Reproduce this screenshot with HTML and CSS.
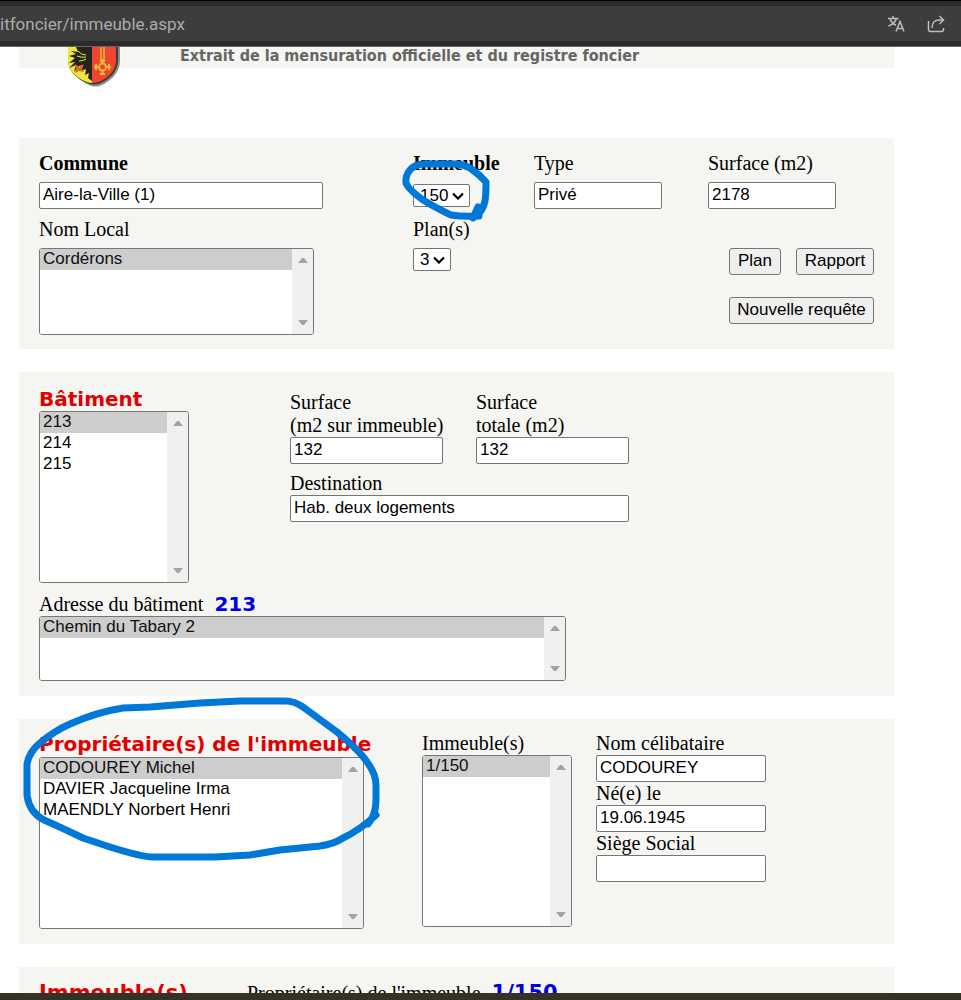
FILE: index.html
```html
<!DOCTYPE html>
<html lang="fr">
<head>
<meta charset="utf-8">
<title>Extrait foncier</title>
<link rel="stylesheet" href="styles.css">
</head>
<body>
<svg class="defs" aria-hidden="true">
  <symbol id="up" viewBox="0 0 10 5"><path d="M0 5 4 0h2l4 5z" fill="#a3a3a3"/></symbol>
  <symbol id="down" viewBox="0 0 10 5"><path d="M0 0h10L6 5H4z" fill="#a3a3a3"/></symbol>
</svg>
<header class="browser">
  <div class="address">
    <span class="url">itfoncier/immeuble.aspx</span>
    <button class="tool" aria-label="Traduire"><svg width="18" height="18" viewBox="0 0 18 18"><path d="M1 3.5h10.500M6 1v2.500M3 3.500c.8 3 3.200 5.500 6 6.700M9.300 3.500C8.500 7 5.500 9.600 1.500 11M9 16.500 13 6.500l4 10M10.200 13.500h5.600"/></svg></button>
    <button class="tool" aria-label="Partager"><svg width="18" height="18" viewBox="0 0 18 18"><path d="M1.500 6v8.500q0 2 2 2h11q2 0 2-2V13M5 13c0-5 3-8 7-8h4.500M12.500 1l4 4-4 4"/></svg></button>
  </div>
</header>
<main class="page">
  <div class="banner">
    <svg class="crest" width="56" height="41" viewBox="0 0 56 41">
      <path d="M4 0h50v14c0 11-9 20-18 24q-6 3-13 0C13 34 4 25 4 14z" fill="#8c8c88"/>
      <path d="M2 0h50v13c0 11-8 19-17 23q-7 3-14 0C11 32 2 24 2 13z" fill="#3e3b34"/>
      <path d="M2 0h24v36q-4 0-8-2C8 29 2 22 2 13z" fill="#eee63c"/>
      <path d="M26 0h24v13c0 10-7 17-15 21q-4 2-9 2z" fill="#ee4630"/>
      <path d="M10 0h16v34l-4-3 1-5-4 2 1-6-5 2 2-6-4 1-5 6 2-7-7 3 6-6-6 1 6-5-6-2 7-2-5-3 7 1-2-5z" fill="#24231f"/>
      <path d="M12 4q3 4 8 4M11 9q5 2 9 1M13 14q4 0 7-2" fill="none" stroke="#eee63c"/>
      <path d="m9 17 4 3 5-3-2 5 2 3-5-1-4 2 1-4z" fill="#d96b28"/>
      <path d="M35 0v14M38 0v14" stroke="#e5b73a" stroke-width="1.500"/>
      <g fill="none" stroke="#e9b93b" stroke-width="2"><circle cx="36.500" cy="20" r="3.500"/><path d="M36.500 12v4M36.500 24v4M28 20h4M41 20h4M34 14h5M34 27h5M30 17v6M43 17v6"/></g>
    </svg>
    <h1 class="title">Extrait de la mensuration officielle et du registre foncier</h1>
  </div>

  <section class="panel property">
    <div class="field spaced"><label class="strong" for="commune">Commune</label><input class="w-commune" id="commune" value="Aire-la-Ville (1)"></div>
    <div class="field spaced"><label class="strong" for="immeuble">Immeuble</label><select class="drop" id="immeuble"><option>150</option></select></div>
    <div class="field spaced"><label for="type">Type</label><input class="w-short" id="type" value="Privé"></div>
    <div class="field spaced"><label for="surface">Surface (m2)</label><input class="w-short" id="surface" value="2178"></div>
    <div class="field spaced"><label for="local">Nom Local</label>
      <div class="list local"><select id="local" size="4"><option selected>Cordérons</option></select><span class="track"><svg><use href="#up"/></svg><svg><use href="#down"/></svg></span></div></div>
    <div class="field spaced"><label for="plan">Plan(s)</label><select class="drop" id="plan"><option>3</option></select></div>
    <div class="actions">
      <button class="btn">Plan</button><button class="btn">Rapport</button>
      <button class="btn wide">Nouvelle requête</button>
    </div>
    <svg class="ink ink-a" width="92" height="68" viewBox="400 158 92 68"><path d="M478 207 473 218Q483 212 485 201C486 196 486 190 486 182Q479 174 470 168Q463 164 456 164H424Q415 164 410 170Q405 176 406 183Q408 189 423 200Q438 209 451 215Q464 217 479 216"/></svg>
  </section>

  <section class="panel building">
    <div class="building-top">
      <div class="field building-list"><label class="heading" for="batiment">Bâtiment</label>
        <div class="list tall narrow"><select id="batiment" size="8"><option selected>213</option><option>214</option><option>215</option></select><span class="track"><svg><use href="#up"/></svg><svg><use href="#down"/></svg></span></div></div>
      <div class="details">
        <div class="field"><label for="s1">Surface<br>(m2 sur immeuble)</label><input id="s1" value="132"></div>
        <div class="field"><label for="s2">Surface<br>totale (m2)</label><input id="s2" value="132"></div>
        <div class="field full"><label for="dest">Destination</label><input id="dest" value="Hab. deux logements"></div>
      </div>
    </div>
    <div class="field"><label class="ref-label" for="adresse">Adresse du bâtiment <b class="ref">213</b></label>
      <div class="list address-list"><select id="adresse" size="3"><option selected>Chemin du Tabary 2</option></select><span class="track"><svg><use href="#up"/></svg><svg><use href="#down"/></svg></span></div></div>
  </section>

  <section class="panel owners">
    <div class="field"><label class="heading" for="owners">Propriétaire(s) de l'immeuble</label>
      <div class="list tall owner-list"><select id="owners" size="8"><option selected>CODOUREY Michel</option><option>DAVIER Jacqueline Irma</option><option>MAENDLY Norbert Henri</option></select><span class="track"><svg><use href="#up"/></svg><svg><use href="#down"/></svg></span></div></div>
    <div class="field"><label for="imms">Immeuble(s)</label>
      <div class="list tall narrow"><select id="imms" size="8"><option selected>1/150</option></select><span class="track"><svg><use href="#up"/></svg><svg><use href="#down"/></svg></span></div></div>
    <div class="person">
      <div class="field"><label for="nom">Nom célibataire</label><input id="nom" value="CODOUREY"></div>
      <div class="field"><label for="ne">Né(e) le</label><input id="ne" value="19.06.1945"></div>
      <div class="field"><label for="siege">Siège Social</label><input id="siege"></div>
    </div>
    <svg class="ink ink-b" width="362" height="168" viewBox="20 695 362 168"><path d="M368 824Q376 815 376 800V785Q376 774 367 762Q360 751 337 732L303 707Q294 701 286 701H240L200 703 150 707 123 708Q97 712 70 724Q54 731 40 743Q29 752 27 764V795Q29 812 44 820Q58 826 83 838L110 847Q142 857 153 857H215L250 855 280 850 320 846Q334 844 343 838Q360 830 376 815"/></svg>
  </section>

  <section class="panel properties">
    <h2 class="heading">Immeuble(s)</h2>
    <p class="ref-label">Propriétaire(s) de l'immeuble <b class="ref">1/150</b></p>
  </section>
</main>
<footer class="taskbar"></footer>
</body>
</html>
```
FILE: styles.css
```css
* { box-sizing: border-box; }
body {
  margin: 0;
  height: 100vh;
  display: flex;
  flex-direction: column;
  overflow: hidden;
  background: #fff;
  color: #000;
  font: 20px/23px "Liberation Serif", "Times New Roman", serif;
}
.defs { display: none; }
.browser {
  flex: none;
  padding: 5px 0;
  border-top: 1px solid #000;
  border-bottom: 1px solid #666;
  background: #2b2b2b;
}
.address {
  display: flex;
  align-items: center;
  gap: 22px;
  height: 35px;
  padding-right: 16px;
  background: #3d3d3d;
  color: #ababab;
  font: 17px/24px Roboto, "Noto Sans", sans-serif;
}
.url { flex: 1; }
.tool { display: flex; padding: 0; border: 0; background: none; }
.tool svg { fill: none; stroke: #bdbdbd; stroke-width: 1.5; }
.page { flex: 1; min-height: 0; overflow: hidden; padding: 0 67px 0 19px; }
.banner {
  position: relative;
  height: 21px;
  margin-bottom: 70px;
  padding-left: 161px;
  background: #f5f5f1;
}
.crest { position: absolute; left: 47px; top: 0; }
.title { margin: 0; color: #666; font: bold 16px/18px "DejaVu Sans Condensed", "DejaVu Sans", sans-serif; white-space: nowrap; }
.panel {
  position: relative;
  margin-bottom: 23px;
  padding: 13px 20px 14px;
  background: #f5f5f1;
}
.field { display: flex; flex-direction: column; align-items: flex-start; }
.field label { white-space: nowrap; }
.spaced { gap: 7px; }
.spaced label { line-height: 24px; }
.strong { font-weight: bold; }
.heading {
  margin: 0;
  color: #e10000;
  font: bold 20px/24px "DejaVu Sans", Verdana, sans-serif;
  white-space: nowrap;
}
.ref-label { margin: 0; line-height: 24px; }
.ref { margin-left: 6px; color: #0000e1; font: bold 20px/24px "DejaVu Sans", Verdana, sans-serif; }
input, select, .btn { margin: 0; color: #000; font: 17px/19px "Liberation Sans", Arial, sans-serif; }
input {
  width: 100%;
  height: 27px;
  padding: 0 3px 2px;
  border: 1px solid #767676;
  border-radius: 2px;
  background: #fff;
}
.drop {
  appearance: none;
  height: 23px;
  padding: 0 20px 0 6px;
  border: 1px solid #767676;
  border-radius: 2px;
  background: #fff url("data:image/svg+xml,%3Csvg xmlns='http://www.w3.org/2000/svg' width='12' height='8'%3E%3Cpath d='M1 1.5l5 5 5-5' fill='none' stroke='%23000' stroke-width='2.2'/%3E%3C/svg%3E") no-repeat right 5px center;
}
#immeuble { margin-top: 2px; }
.list {
  display: flex;
  overflow: hidden;
  border: 1px solid #767676;
  border-radius: 3px;
  background: #fff;
}
.list select { flex: 1; min-width: 0; height: 100%; padding: 0; border: 0; border-radius: 0; outline: 0; overflow: hidden; background: #fff; }
.list option { height: 21px; min-height: 21px; padding: 0 3px 2px; }
.list option:checked { background: linear-gradient(#cdcdcd, #cdcdcd); color: #101010; }
.track {
  display: flex;
  flex: none;
  flex-direction: column;
  justify-content: space-between;
  align-items: center;
  width: 21px;
  padding: 9px 0;
  background: #f0f0f0;
}
.track svg { width: 10px; height: 5px; }
.local { width: 275px; height: 87px; }
.tall { height: 172px; }
.narrow { width: 150px; }
.address-list { width: 527px; height: 65px; }
.owner-list { width: 325px; }
.property { display: grid; grid-template-columns: 374px 121px 174px 1fr; row-gap: 8px; }
.w-commune { width: 284px; }
.w-short { width: 128px; }
.actions {
  grid-column: 3 / 5;
  justify-self: end;
  display: grid;
  grid-template-columns: 52px 78px;
  gap: 22px 15px;
  align-content: start;
  padding-top: 31px;
}
.btn { height: 27px; padding: 0 0 2px; border: 1px solid #767676; border-radius: 3px; background: #efefef; white-space: nowrap; }
.wide { grid-column: span 2; }
.building { padding: 15px 20px; }
.building-top { display: flex; margin-bottom: 9px; }
.building-list { width: 251px; }
.details { display: grid; grid-template-columns: 153px 153px; column-gap: 33px; row-gap: 8px; align-content: start; padding-top: 4px; }
.full { grid-column: span 2; }
.owners { display: grid; grid-template-columns: 383px 174px 170px; padding-bottom: 15px; }
.owners .heading { line-height: 25px; }
.properties { display: grid; grid-template-columns: 208px 1fr; margin-bottom: 0; padding-top: 14px; }
.properties .heading, .properties .ref { font-size: 21px; }
.ink { position: absolute; fill: none; stroke: #0078d7; stroke-width: 7; stroke-linecap: round; stroke-linejoin: round; pointer-events: none; }
.ink-a { left: 381px; top: 20px; }
.ink-b { left: 1px; top: -24px; }
.taskbar { flex: none; height: 7px; background: #343126; }
```
